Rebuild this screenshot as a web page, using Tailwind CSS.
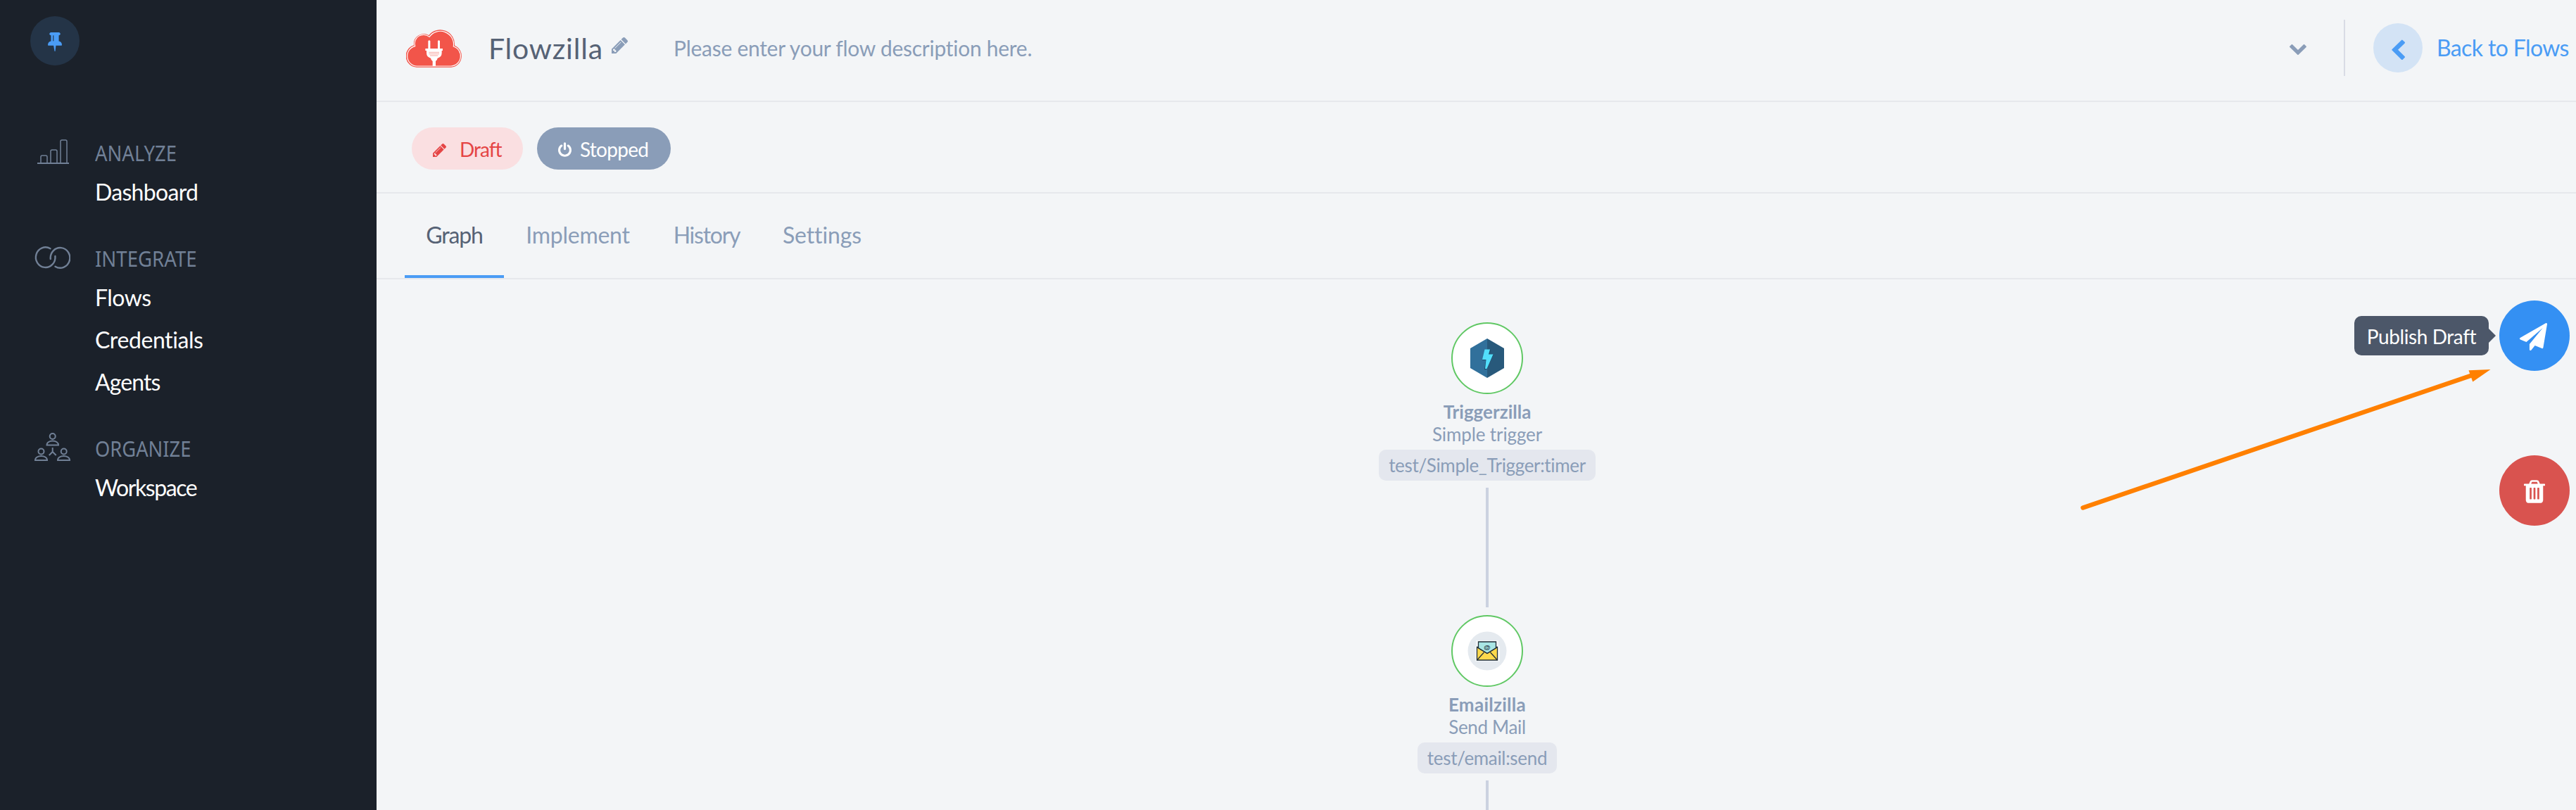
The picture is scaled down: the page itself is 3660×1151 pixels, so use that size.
<!DOCTYPE html>
<html lang="en">
<head>
<meta charset="utf-8">
<title>Flowzilla</title>
<script src="https://cdn.jsdelivr.net/npm/@tailwindcss/browser@4"></script>
</head>
<body class="bg-[#f3f5f7] font-['Lato',sans-serif] text-[#8a9db8]">
<div class="flex h-[1151px] w-[3660px] overflow-hidden">

  <aside class="w-[535px] shrink-0 bg-[#1b212a] pt-[23px]">
    <div class="ml-[43px] mb-[99px] flex size-[70px] items-center justify-center rounded-full bg-[#243447]">
      <svg class="mt-[1px] h-[29px] w-5 fill-[#4a9cf5]" viewBox="320 0 1152 1792" preserveAspectRatio="none"><path d="M800 864v-448q0-14-9-23t-23-9-23 9-9 23v448q0 14 9 23t23 9 23-9 9-23zm672 352q0 26-19 45t-45 19h-429l-51 483q-2 12-10.5 20.5t-20.5 8.5h-1q-27 0-32-27l-76-485h-404q-26 0-45-19t-19-45q0-123 78.5-221.5t177.5-98.5v-512q-52 0-90-38t-38-90 38-90 90-38h640q52 0 90 38t38 90-38 90-90 38v512q99 0 177.5 98.5t78.5 221.5z"/></svg>
    </div>
    <nav class="flex flex-col gap-10 pl-12 text-[32px] leading-[60px] text-white">
      <section class="flex gap-[35px]">
        <svg class="h-[50px] w-[52px] shrink-0 fill-none stroke-[#718096]" viewBox="0 0 52 50" stroke-width="1.5"><path d="M5 40h45" stroke-width="2"/><path d="M10 40V31q0-2 2-2h5q2 0 2 2v9M24 40V23q0-2 2-2h5q2 0 2 2v17M38 40V9q0-2 2-2h5q2 0 2 2v31"/></svg>
        <div class="pt-px">
          <h2 class="origin-left scale-x-[.914] font-['Noto_Sans',sans-serif] text-[30px] leading-[50px] text-[#718096]">ANALYZE</h2>
          <a class="block tracking-[-.69px]">Dashboard</a>
        </div>
      </section>
      <section class="-mt-px flex gap-[35px]">
        <svg class="h-[50px] w-[52px] shrink-0 fill-none stroke-[#718096]" viewBox="0 0 52 50" stroke-width="2.4" stroke-linecap="round"><path d="M23.500 11.200A13.800 14.300 0 1 0 30.400 22"/><path d="M23.800 26A13.800 14.300 0 1 1 30.500 36.700"/></svg>
        <div class="pt-px">
          <h2 class="origin-left scale-x-[.92] font-['Noto_Sans',sans-serif] text-[30px] leading-[50px] text-[#718096]">INTEGRATE</h2>
          <a class="block tracking-[-.52px]">Flows</a>
          <a class="block tracking-[-.42px]">Credentials</a>
          <a class="block tracking-[-.91px]">Agents</a>
        </div>
      </section>
      <section class="-mt-px flex gap-[35px]">
        <svg class="h-[50px] w-[52px] shrink-0 fill-none stroke-[#718096]" viewBox="0 0 52 50" stroke-width="2"><circle cx="26.700" cy="8" r="4"/><path d="M18.500 20.500h16.500c0-8-16.500-8-16.500 0z"/><path d="M26.700 24v6l-5 5M26.700 30l5 5"/><circle cx="10.500" cy="29.500" r="4"/><path d="M2 42h17c0-8-17-8-17 0z"/><circle cx="42.700" cy="29.500" r="4"/><path d="M34 42h17c0-8-17-8-17 0z"/></svg>
        <div class="pt-px">
          <h2 class="origin-left scale-x-[.91] font-['Noto_Sans',sans-serif] text-[30px] leading-[50px] text-[#718096]">ORGANIZE</h2>
          <a class="block tracking-[-1.4px]">Workspace</a>
        </div>
      </section>
    </nav>
  </aside>

  <main class="flex flex-1 flex-col">
    <header class="flex h-[145px] items-center border-b-2 border-[#e6e8ec] pb-2 pl-[42px]">
      <svg class="h-[57px] w-20" viewBox="20 25 240 171">
        <path fill="#f2554a" d="M65 195A48 48 0 0 1 53 101A43 43 0 0 1 117 58A62 62 0 0 1 227 102A48.500 48.500 0 0 1 212 195Z"/>
        <path fill="none" stroke="#fff" stroke-width="3.500" d="M66 190A42 43 0 0 1 58 105A38 38 0 0 1 119 65A57 57 0 0 1 222 106A43 43 0 0 1 211 190Z"/>
        <path fill="#fff" d="M114 83q4.500-6 9 0v32h-9zM155 83q4.500-6 9 0v32h-9zM102 115h74v9h-4v10q0 18-18 22-1 8-8 13v21h-13v-21q-7-5-8-13-18-4-18-22v-10h-5z"/>
        <path stroke="#f5958e" stroke-width="2.500" d="M117 131h44M117 138h44M122 145h34"/>
      </svg>
      <h1 class="ml-[37px] w-[175px] pt-0.5 text-[41px] leading-none tracking-[.79px] text-[#566275]">Flowzilla</h1>
      <svg class="mb-[6px] size-[23px] fill-[#8a9db8]" viewBox="128 149 1516 1516" fill-rule="evenodd"><path d="M491 1536l91-91-235-235-91 91v107h128v128h107zm523-928q0-22-22-22-10 0-17 7l-542 542q-7 7-7 17 0 22 22 22 10 0 17-7l542-542q7-7 7-17zm-54-192l416 416-832 832h-416v-416zm683 96q0 53-37 90l-166 166-416-416 166-165q36-38 90-38 53 0 91 38l235 234q37 39 37 91z"/></svg>
      <p class="ml-[65px] pt-0.5 text-[30px] tracking-[-.27px]">Please enter your flow description here.</p>
      <div class="ml-auto flex w-[407px] items-center">
        <svg class="mt-[6px] h-[15px] w-6 fill-[#8a9db8]" viewBox="90 533 1612 1036" preserveAspectRatio="none"><path d="M1683 808l-742 741q-19 19-45 19t-45-19l-742-741q-19-19-19-45.500t19-45.500l166-165q19-19 45-19t45 19l531 531 531-531q19-19 45-19t45 19l166 165q19 19 19 45.500t-19 45.500z"/></svg>
        <div class="ml-[53px] h-20 w-0.5 bg-[#d9dce5]"></div>
        <div class="ml-10 flex size-[70px] items-center justify-center rounded-full bg-[#d3e3f5]">
          <svg class="mt-[5px] h-[29px] w-[19px] fill-[#4a9cf5]" viewBox="391 -6 1055 1644" preserveAspectRatio="none"><path d="M1427 301l-531 531 531 531q19 19 19 45t-19 45l-166 166q-19 19-45 19t-45-19l-742-742q-19-19-19-45t19-45l742-742q19-19 45-19t45 19l166 166q19 19 19 45t-19 45z"/></svg>
        </div>
        <a class="ml-5 text-[32px] leading-[60px] tracking-[-.62px] whitespace-nowrap text-[#4a9cf5]">Back to Flows</a>
      </div>
    </header>

    <div class="flex h-[130px] gap-5 border-b-2 border-[#e6e8ec] pt-9 pl-[50px] text-[28px]">
      <div class="flex h-[60px] w-[158px] items-center rounded-full bg-[#fadfe1] pl-[30px] text-[#e54545]">
        <svg class="mt-[5px] mr-[19px] size-[19px] fill-current" viewBox="128 149 1516 1516" fill-rule="evenodd"><path d="M491 1536l91-91-235-235-91 91v107h128v128h107zm523-928q0-22-22-22-10 0-17 7l-542 542q-7 7-7 17 0 22 22 22 10 0 17-7l542-542q7-7 7-17zm-54-192l416 416-832 832h-416v-416zm683 96q0 53-37 90l-166 166-416-416 166-165q36-38 90-38 53 0 91 38l235 234q37 39 37 91z"/></svg>
        <span class="pt-px tracking-[-1px]">Draft</span>
      </div>
      <div class="flex h-[60px] w-[190px] items-center rounded-full bg-[#8a9db8] pl-[30px] text-white">
        <svg class="mt-[3px] mr-[12px] h-[21px] w-[19px] fill-current" viewBox="128 0 1536 1664"><path d="M1664 896q0 156-61 298t-164 245-245 164-298 61-298-61-245-164-164-245-61-298q0-182 80.500-343t226.500-270q43-32 95.500-25t83.500 50q32 42 24.500 94.500t-49.500 84.500q-98 74-151.500 181t-53.500 228q0 104 40.500 198.500t109.500 163.500 163.500 109.500 198.500 40.500 198.500-40.500 163.500-109.500 109.500-163.500 40.500-198.500q0-121-53.500-228t-151.500-181q-42-32-49.500-84.500t24.500-94.500q31-43 84-50t95 25q146 109 226.500 270t80.500 343zm-640-768v640q0 52-38 90t-90 38-90-38-38-90v-640q0-52 38-90t90-38 90 38 38 90z"/></svg>
        <span class="pt-px tracking-[-.72px]">Stopped</span>
      </div>
    </div>

    <div class="flex h-[122px] border-b-2 border-[#e6e8ec] pl-10 text-center text-[32px] leading-[117px]">
      <a class="w-[141px] border-b-4 border-[#4a9cf5] tracking-[-1.19px] text-[#566275]">Graph</a>
      <a class="w-[210px] tracking-[-.26px]">Implement</a>
      <a class="w-[156px] tracking-[-1.24px]">History</a>
      <a class="w-[172px] tracking-[-.1px]">Settings</a>
    </div>

    <div class="relative flex-1 overflow-hidden">
      <!-- flow graph -->
      <div class="absolute top-[61px] left-[1378px] flex w-[400px] flex-col items-center text-[26px] leading-8">
        <div class="flex size-[102px] shrink-0 items-center justify-center rounded-full border-2 border-[#60c864] bg-white">
          <svg class="h-14 w-12" viewBox="0 0 48 56"><path fill="#31709b" d="M24 0L0 14v28l24 14z"/><path fill="#28597b" d="M24 0l24 14v28L24 56z"/><path fill="#1c4a68" d="M21 16h8l-2 7h6l-10 21h-3l2-13h-5z"/><path fill="#52dffc" d="M20.500 15.500h7.500l-2 7h6.500L23.500 43h-2.500l1.500-13h-5.500z"/></svg>
        </div>
        <b class="mt-[9px]">Triggerzilla</b>
        <span class="tracking-[-.11px]">Simple trigger</span>
        <span class="mt-1.5 w-[308px] rounded-[10px] bg-[#e4e7ee] text-center leading-[44px] tracking-[-.34px]">test/Simple_Trigger:timer</span>
        <div class="mt-2.5 mb-[11px] h-[170px] w-1 bg-[#cbd2e0]"></div>
        <div class="flex size-[102px] shrink-0 items-center justify-center rounded-full border-2 border-[#60c864] bg-white">
          <svg class="size-14" viewBox="0 0 56 56"><circle cx="28" cy="28" r="27.500" fill="#e5eaef"/><path fill="#f3f6f8" d="M12 13h32v8h2v22H11V21h1z"/><path fill="#fdd94c" stroke="#23303a" stroke-width="1.300" d="M13.500 22.500h29V41h-29z"/><path fill="#a9e6e4" stroke="#23303a" stroke-width="1.300" d="M15.500 15h25v9L28 31.500 15.500 24z"/><path fill="none" stroke="#23303a" stroke-width="1.300" d="M13.500 22.500L28 31.500l14.500-9M13.500 41l10-11M42.500 41l-10-11"/><text x="28" y="25.500" text-anchor="middle" font-size="9.500" font-weight="700" fill="#23303a" font-family="Liberation Sans, sans-serif">@</text></svg>
        </div>
        <b class="mt-[9px] tracking-[.28px]">Emailzilla</b>
        <span class="tracking-[-.34px]">Send Mail</span>
        <span class="mt-1.5 w-[198px] rounded-[10px] bg-[#e4e7ee] text-center leading-[44px] tracking-[-.32px]">test/email:send</span>
        <div class="mt-2.5 h-[42px] w-1 bg-[#cbd2e0]"></div>
      </div>

      <!-- pointer towards the publish button -->
      <svg class="absolute top-[123px] left-[2415px] h-[210px] w-[596px]" viewBox="0 0 596 210"><path d="M9.500 201.500L563 13" stroke="#ff8000" stroke-width="6.500" stroke-linecap="round"/><path fill="#ff8000" d="M588.500 5L557.500 6.200 563.300 22.500z"/></svg>

      <!-- floating actions -->
      <div class="absolute top-[30px] right-[9px] flex flex-col items-end gap-[120px]">
        <div class="flex items-center">
          <div class="flex h-14 w-[191px] items-center justify-center rounded-[10px] bg-[#4c5769] pt-px text-[28px] tracking-[-.41px] whitespace-nowrap text-white">Publish Draft</div>
          <svg class="mr-[5px] h-5 w-2.5 fill-[#4c5769]" viewBox="0 0 10 20"><path d="M0 0l10 10L0 20z"/></svg>
          <div class="flex size-[100px] items-center justify-center rounded-full bg-[#3490f3]">
            <svg class="mt-[3px] mr-[3px] size-[39px] fill-white" viewBox="0 0 1792 1792"><path d="M1764 11q33 24 27 64l-256 1536q-5 29-32 45-14 8-31 8-11 0-24-5l-453-185-242 295q-18 23-49 23-13 0-22-4-19-7-30.500-23.500t-11.500-36.500v-349l864-1059-1069 925-395-162q-37-14-40-55-2-40 32-59l1664-960q15-9 32-9 20 0 36 11z"/></svg>
          </div>
        </div>
        <div class="flex size-[100px] items-center justify-center rounded-full bg-[#d9534f]">
          <svg class="mt-[2px] h-[33px] w-[30px] fill-white" viewBox="192 128 1408 1536"><path fill-rule="evenodd" d="M704 1376v-704q0-14-9-23t-23-9h-64q-14 0-23 9t-9 23v704q0 14 9 23t23 9h64q14 0 23-9t9-23zm256 0v-704q0-14-9-23t-23-9h-64q-14 0-23 9t-9 23v704q0 14 9 23t23 9h64q14 0 23-9t9-23zm256 0v-704q0-14-9-23t-23-9h-64q-14 0-23 9t-9 23v704q0 14 9 23t23 9h64q14 0 23-9t9-23zm-544-992h448l-48-117q-7-9-17-11h-317q-10 2-17 11zm928 32v64q0 14-9 23t-23 9h-96v948q0 83-47 143.500t-113 60.500h-832q-66 0-113-58.500t-47-141.500v-952h-96q-14 0-23-9t-9-23v-64q0-14 9-23t23-9h309l70-167q15-37 54-63t79-26h320q40 0 79 26t54 63l70 167h309q14 0 23 9t9 23z"/></svg>
        </div>
      </div>
    </div>
  </main>
</div>
</body>
</html>
